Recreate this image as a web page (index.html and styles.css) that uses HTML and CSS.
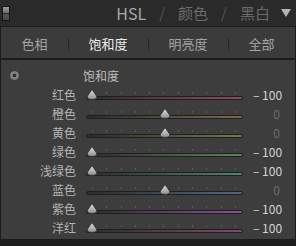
FILE: index.html
```html
<!DOCTYPE html>
<html lang="zh">
<head>
    <meta charset="UTF-8">
    <title>HSL</title>
    <link rel="stylesheet" href="styles.css">
</head>
<body>
    <!-- Panel Header -->
    <div class="header">
        <span class="grip"></span>
        <div class="modes">
            <span class="mode active">HSL</span>
            <span class="slash">/</span>
            <span class="mode">颜色</span>
            <span class="slash">/</span>
            <span class="mode">黑白</span>
            <span class="arrow"></span>
        </div>
    </div>

    <!-- Tabs -->
    <div class="tabs">
        <div class="tab">色相</div>
        <div class="tab active">饱和度</div>
        <div class="tab">明亮度</div>
        <div class="tab">全部</div>
    </div>

    <!-- Saturation Sliders -->
    <div class="panel">
        <svg width="0" height="0" class="defs">
            <defs>
                <linearGradient id="thumbFill" x1="0" y1="0" x2="0" y2="1">
                    <stop offset="0" stop-color="#e2e2e2"/>
                    <stop offset="1" stop-color="#8c8c8c"/>
                </linearGradient>
            </defs>
        </svg>

        <div class="panel-title">
            <span class="target"></span>
            <span class="title">饱和度</span>
        </div>

        <div class="row">
            <div class="label">红色</div>
            <div class="slider">
                <div class="ticks"><i></i><i></i><i></i><i></i><i></i><i></i><i></i><i></i><i></i><i></i><i></i></div>
                <div class="track red"></div>
                <svg class="thumb at-min" width="12" height="11" viewBox="0 0 12 11"><path d="M6 0.6 L10.2 6.4 C11.8 9.2 9.6 10.4 6 10.4 C2.4 10.4 0.2 9.2 1.8 6.4 Z"/></svg>
            </div>
            <div class="value">– 100</div>
        </div>

        <div class="row">
            <div class="label">橙色</div>
            <div class="slider">
                <div class="ticks"><i></i><i></i><i></i><i></i><i></i><i></i><i></i><i></i><i></i><i></i><i></i></div>
                <div class="track orange"></div>
                <svg class="thumb at-mid" width="12" height="11" viewBox="0 0 12 11"><path d="M6 0.6 L10.2 6.4 C11.8 9.2 9.6 10.4 6 10.4 C2.4 10.4 0.2 9.2 1.8 6.4 Z"/></svg>
            </div>
            <div class="value zero">0</div>
        </div>

        <div class="row">
            <div class="label">黄色</div>
            <div class="slider">
                <div class="ticks"><i></i><i></i><i></i><i></i><i></i><i></i><i></i><i></i><i></i><i></i><i></i></div>
                <div class="track yellow"></div>
                <svg class="thumb at-mid" width="12" height="11" viewBox="0 0 12 11"><path d="M6 0.6 L10.2 6.4 C11.8 9.2 9.6 10.4 6 10.4 C2.4 10.4 0.2 9.2 1.8 6.4 Z"/></svg>
            </div>
            <div class="value zero">0</div>
        </div>

        <div class="row">
            <div class="label">绿色</div>
            <div class="slider">
                <div class="ticks"><i></i><i></i><i></i><i></i><i></i><i></i><i></i><i></i><i></i><i></i><i></i></div>
                <div class="track green"></div>
                <svg class="thumb at-min" width="12" height="11" viewBox="0 0 12 11"><path d="M6 0.6 L10.2 6.4 C11.8 9.2 9.6 10.4 6 10.4 C2.4 10.4 0.2 9.2 1.8 6.4 Z"/></svg>
            </div>
            <div class="value">– 100</div>
        </div>

        <div class="row">
            <div class="label">浅绿色</div>
            <div class="slider">
                <div class="ticks"><i></i><i></i><i></i><i></i><i></i><i></i><i></i><i></i><i></i><i></i><i></i></div>
                <div class="track aqua"></div>
                <svg class="thumb at-min" width="12" height="11" viewBox="0 0 12 11"><path d="M6 0.6 L10.2 6.4 C11.8 9.2 9.6 10.4 6 10.4 C2.4 10.4 0.2 9.2 1.8 6.4 Z"/></svg>
            </div>
            <div class="value">– 100</div>
        </div>

        <div class="row">
            <div class="label">蓝色</div>
            <div class="slider">
                <div class="ticks"><i></i><i></i><i></i><i></i><i></i><i></i><i></i><i></i><i></i><i></i><i></i></div>
                <div class="track blue"></div>
                <svg class="thumb at-mid" width="12" height="11" viewBox="0 0 12 11"><path d="M6 0.6 L10.2 6.4 C11.8 9.2 9.6 10.4 6 10.4 C2.4 10.4 0.2 9.2 1.8 6.4 Z"/></svg>
            </div>
            <div class="value zero">0</div>
        </div>

        <div class="row">
            <div class="label">紫色</div>
            <div class="slider">
                <div class="ticks"><i></i><i></i><i></i><i></i><i></i><i></i><i></i><i></i><i></i><i></i><i></i></div>
                <div class="track purple"></div>
                <svg class="thumb at-min" width="12" height="11" viewBox="0 0 12 11"><path d="M6 0.6 L10.2 6.4 C11.8 9.2 9.6 10.4 6 10.4 C2.4 10.4 0.2 9.2 1.8 6.4 Z"/></svg>
            </div>
            <div class="value">– 100</div>
        </div>

        <div class="row">
            <div class="label">洋红</div>
            <div class="slider">
                <div class="ticks"><i></i><i></i><i></i><i></i><i></i><i></i><i></i><i></i><i></i><i></i><i></i></div>
                <div class="track magenta"></div>
                <svg class="thumb at-min" width="12" height="11" viewBox="0 0 12 11"><path d="M6 0.6 L10.2 6.4 C11.8 9.2 9.6 10.4 6 10.4 C2.4 10.4 0.2 9.2 1.8 6.4 Z"/></svg>
            </div>
            <div class="value">– 100</div>
        </div>
    </div>
</body>
</html>
```

FILE: styles.css
```css
/* Basic Styling */
body {
    margin: 0;
    background-color: #1e1e1e;
    font-family: "Noto Sans CJK SC", "Noto Sans", sans-serif;
    color: #b0b0b0;
    width: 296px;
    height: 246px;
    overflow: hidden;
}

/* Header */
.header {
    height: 26px;
    background-color: #2a2a2a;
    display: flex;
    align-items: center;
    justify-content: space-between;
    padding: 0 5px 0 2px;
}

.grip {
    width: 6px;
    height: 13px;
    border: 1px solid #151515;
    background: linear-gradient(#a0a0a0, #6c6c6c 45%, #2a2a2a 50%, #555 55%, #4a4a4a);
}

.modes {
    display: flex;
    align-items: center;
    font-size: 15px;
    line-height: 26px;
}

.mode {
    color: #6a6a6a;
    margin-left: 13px;
}

.mode.active {
    color: #a8a8a8;
    font-size: 16px;
}

.slash {
    color: #555;
    margin-left: 13px;
}

.arrow {
    margin-left: 11px;
    width: 0;
    height: 0;
    border-left: 5px solid transparent;
    border-right: 5px solid transparent;
    border-top: 8px solid #b4b4b4;
}

/* Tabs */
.tabs {
    display: flex;
    height: 31px;
    background-color: #3b3b3b;
    border: 1px solid #1c1c1c;
    border-bottom-width: 2px;
}

.tab {
    flex: 1 1 auto;
    text-align: center;
    font-size: 13px;
    line-height: 33px;
    color: #a4a4a4;
    position: relative;
}

.tab + .tab::before {
    content: "";
    position: absolute;
    left: 0;
    top: 11px;
    height: 13px;
    border-left: 1px solid #262626;
}

.tab.active {
    color: #ececec;
}

/* Slider Panel */
.panel {
    background-color: #3d3d3d;
    border: 1px solid #1c1c1c;
    border-top: none;
    border-bottom-width: 2px;
    height: 181px;
    padding-top: 1px;
    box-sizing: border-box;
}

.defs {
    position: absolute;
}

.panel-title {
    display: flex;
    align-items: center;
    height: 20px;
    padding-top: 4px;
}

.target {
    width: 7px;
    height: 7px;
    margin-left: 9px;
    border-radius: 50%;
    border: 1px solid #8a8a8a;
    background: radial-gradient(circle, #2e2e2e 0 1.5px, #7c7c7c 2px);
}

.title {
    margin-left: 64px;
    font-size: 12px;
    color: #bcbcbc;
}

.row {
    display: grid;
    grid-template-columns: 75px 157px 27px;
    column-gap: 10px;
    height: 19px;
    align-items: center;
}

.label {
    text-align: right;
    font-size: 12px;
    line-height: 19px;
    color: #b4b4b4;
}

.slider {
    position: relative;
    height: 19px;
    display: flex;
    flex-direction: column;
    padding-top: 7px;
    box-sizing: border-box;
}

.ticks {
    display: flex;
    justify-content: space-between;
    height: 2px;
    margin: 0 7px 0 6px;
}

.ticks i {
    width: 1px;
    background-color: #5c5c5c;
}

.track {
    margin-top: 2px;
    height: 2px;
    border: 1px solid #1f1f1f;
    border-radius: 2px;
}

.track.red     { background: linear-gradient(90deg, #2c2c2c, #8e4c58); }
.track.orange  { background: linear-gradient(90deg, #2c2c2c, #7a6a46); }
.track.yellow  { background: linear-gradient(90deg, #2c2c2c, #76784a); }
.track.green   { background: linear-gradient(90deg, #2c2c2c, #5a8854); }
.track.aqua    { background: linear-gradient(90deg, #2c2c2c, #4a8478); }
.track.blue    { background: linear-gradient(90deg, #2c2c2c, #4e6882); }
.track.purple  { background: linear-gradient(90deg, #2c2c2c, #8c4e9a); }
.track.magenta { background: linear-gradient(90deg, #2c2c2c, #82486c); }

/* Slider thumb */
.thumb {
    position: absolute;
    top: 4px;
    fill: url(#thumbFill);
    stroke: #262626;
    stroke-width: 0.8;
}

.thumb.at-min {
    left: 0;
}

.thumb.at-mid {
    left: calc(50% - 6px);
}

.value {
    text-align: right;
    white-space: nowrap;
    font-size: 12px;
    color: #d4d4d4;
}

.value.zero {
    color: #6c6c6c;
}
```
